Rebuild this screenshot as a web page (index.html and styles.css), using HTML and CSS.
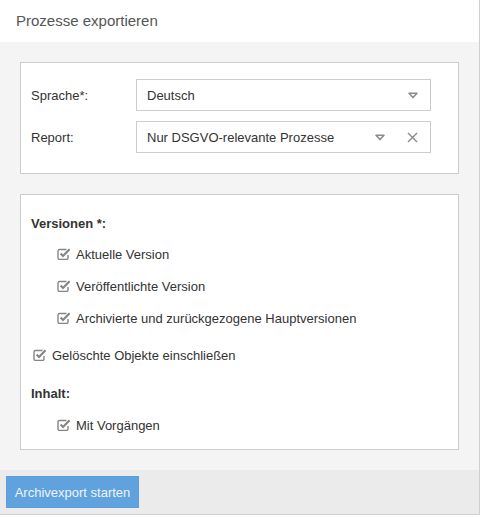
FILE: index.html
```html
<!DOCTYPE html>
<html lang="de">
<head>
<meta charset="utf-8">
<title>Prozesse exportieren</title>
<link rel="stylesheet" href="styles.css">
</head>
<body>
<div class="dialog">
  <div class="dialog-header">Prozesse exportieren</div>
  <div class="dialog-body">
    <div class="panel panel-form">
      <div class="form-row">
        <label class="form-label">Sprache*:</label>
        <div class="select">
          <span class="select-value">Deutsch</span>
          <span class="select-icons">
            <svg class="icon-caret" width="10" height="7" viewBox="0 0 10 7"><path d="M1 1.2 H9 L5 5.6 Z" fill="none" stroke="#8a8a8a" stroke-width="1.5" stroke-linejoin="round"/></svg>
          </span>
        </div>
      </div>
      <div class="form-row">
        <label class="form-label">Report:</label>
        <div class="select">
          <span class="select-value">Nur DSGVO-relevante Prozesse</span>
          <span class="select-icons">
            <svg class="icon-caret" width="10" height="7" viewBox="0 0 10 7"><path d="M1 1.2 H9 L5 5.6 Z" fill="none" stroke="#8a8a8a" stroke-width="1.5" stroke-linejoin="round"/></svg>
            <svg class="icon-clear" width="11" height="11" viewBox="0 0 11 11"><path d="M1 1 L10 10 M10 1 L1 10" stroke="#8a8a8a" stroke-width="1.4"/></svg>
          </span>
        </div>
      </div>
    </div>

    <div class="panel panel-options">
      <div class="group-title">Versionen *:</div>
      <div class="check indent">
        <svg class="check-icon" width="14" height="13" viewBox="0 0 14 13"><path d="M9.5 2.5 H2.5 A1.5 1.5 0 0 0 1 4 V11 A1.5 1.5 0 0 0 2.5 12.5 H9.5 A1.5 1.5 0 0 0 11 11 V8" fill="none" stroke="#858585" stroke-width="1.4"/><path d="M3.6 6.6 L6 9 L12.6 2.2" fill="none" stroke="#858585" stroke-width="2.1"/></svg>
        <span>Aktuelle Version</span>
      </div>
      <div class="check indent">
        <svg class="check-icon" width="14" height="13" viewBox="0 0 14 13"><path d="M9.5 2.5 H2.5 A1.5 1.5 0 0 0 1 4 V11 A1.5 1.5 0 0 0 2.5 12.5 H9.5 A1.5 1.5 0 0 0 11 11 V8" fill="none" stroke="#858585" stroke-width="1.4"/><path d="M3.6 6.6 L6 9 L12.6 2.2" fill="none" stroke="#858585" stroke-width="2.1"/></svg>
        <span>Veröffentlichte Version</span>
      </div>
      <div class="check indent">
        <svg class="check-icon" width="14" height="13" viewBox="0 0 14 13"><path d="M9.5 2.5 H2.5 A1.5 1.5 0 0 0 1 4 V11 A1.5 1.5 0 0 0 2.5 12.5 H9.5 A1.5 1.5 0 0 0 11 11 V8" fill="none" stroke="#858585" stroke-width="1.4"/><path d="M3.6 6.6 L6 9 L12.6 2.2" fill="none" stroke="#858585" stroke-width="2.1"/></svg>
        <span>Archivierte und zurückgezogene Hauptversionen</span>
      </div>
      <div class="check top-level">
        <svg class="check-icon" width="14" height="13" viewBox="0 0 14 13"><path d="M9.5 2.5 H2.5 A1.5 1.5 0 0 0 1 4 V11 A1.5 1.5 0 0 0 2.5 12.5 H9.5 A1.5 1.5 0 0 0 11 11 V8" fill="none" stroke="#858585" stroke-width="1.4"/><path d="M3.6 6.6 L6 9 L12.6 2.2" fill="none" stroke="#858585" stroke-width="2.1"/></svg>
        <span>Gelöschte Objekte einschließen</span>
      </div>
      <div class="group-title group-second">Inhalt:</div>
      <div class="check indent last">
        <svg class="check-icon" width="14" height="13" viewBox="0 0 14 13"><path d="M9.5 2.5 H2.5 A1.5 1.5 0 0 0 1 4 V11 A1.5 1.5 0 0 0 2.5 12.5 H9.5 A1.5 1.5 0 0 0 11 11 V8" fill="none" stroke="#858585" stroke-width="1.4"/><path d="M3.6 6.6 L6 9 L12.6 2.2" fill="none" stroke="#858585" stroke-width="2.1"/></svg>
        <span>Mit Vorgängen</span>
      </div>
    </div>
  </div>
  <div class="dialog-footer">
    <button class="btn-primary" type="button">Archivexport starten</button>
  </div>
</div>
</body>
</html>
```

FILE: styles.css
```css
html, body {
  margin: 0;
  padding: 0;
  background: #ffffff;
}

body {
  font-family: "Liberation Sans", Arial, sans-serif;
  font-size: 13px;
  color: #333333;
}

.dialog {
  width: 479px;
  height: 514px;
  border-right: 1px solid #cfcfcf;
  border-bottom: 1px solid #cfcfcf;
  display: flex;
  flex-direction: column;
  background: #ffffff;
}

.dialog-header {
  height: 42px;
  box-sizing: border-box;
  padding: 12px 0 0 16px;
  font-size: 15px;
  line-height: 18px;
  color: #555555;
  background: #ffffff;
}

.dialog-body {
  flex: 1;
  background: #f4f4f4;
  padding: 20px 20px 0 20px;
  display: flex;
  flex-direction: column;
  gap: 20px;
}

.panel {
  background: #ffffff;
  border: 1px solid #cccccc;
}

.panel-form {
  padding: 16px 27px 20px 10px;
  display: flex;
  flex-direction: column;
  gap: 10px;
}

.form-row {
  display: grid;
  grid-template-columns: 105px 1fr;
  align-items: center;
}

.form-label {
  color: #333333;
}

.select {
  height: 32px;
  box-sizing: border-box;
  border: 1px solid #cccccc;
  display: flex;
  align-items: center;
  padding: 0 12px 0 10px;
}

.select-value {
  flex: 1;
  color: #333333;
}

.select-icons {
  display: flex;
  align-items: center;
  gap: 22px;
}

.icon-caret,
.icon-clear {
  display: block;
}

.panel-options {
  padding: 21px 10px 8px 10px;
  height: 256px;
  box-sizing: border-box;
}

.group-title {
  font-weight: bold;
  line-height: 16px;
  margin-bottom: 6px;
}

.group-second {
  margin-top: 15px;
  margin-bottom: 7px;
}

.check {
  height: 32px;
  display: flex;
  align-items: center;
  gap: 5px;
}

.check.indent {
  padding-left: 26px;
}

.check.top-level {
  padding-left: 2px;
  margin-top: 5px;
}

.check-icon {
  display: block;
  flex: none;
  position: relative;
  top: -1px;
}

.dialog-footer {
  height: 44px;
  box-sizing: border-box;
  background: #ebebeb;
  padding: 6px 0 0 6px;
}

.btn-primary {
  height: 32px;
  width: 133px;
  border: 1px solid #5a9edb;
  background: #5fa2de;
  color: #eef4fb;
  font-family: "Liberation Sans", Arial, sans-serif;
  font-size: 13px;
  padding: 0;
  margin: 0;
  cursor: pointer;
}
```
